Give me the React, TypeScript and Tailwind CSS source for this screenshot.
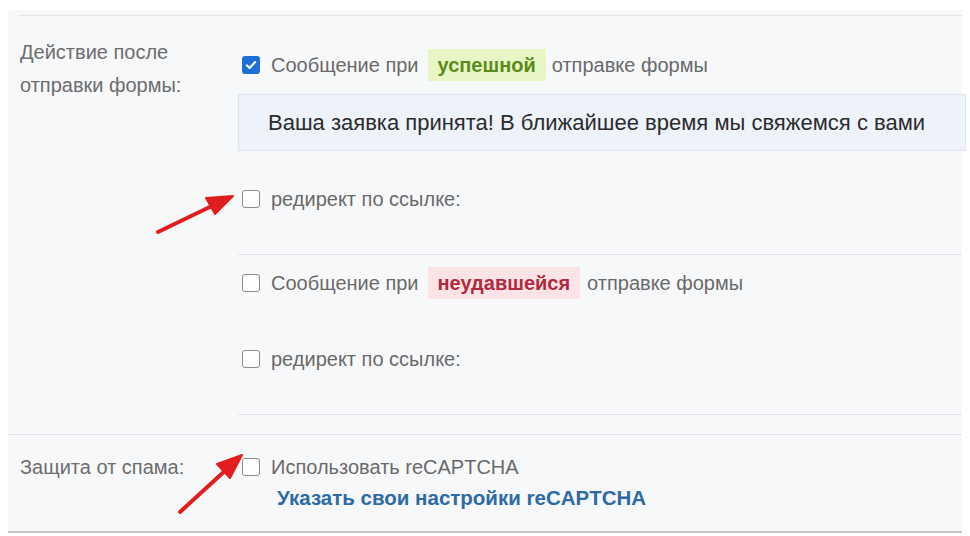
import React from "react";

const Box = ({ checked = false }: { checked?: boolean }) =>
  checked ? (
    <span className="flex h-[18px] w-[18px] shrink-0 items-center justify-center rounded-[3px] bg-[#1c6fd6]">
      <svg viewBox="0 0 16 16" className="h-[14px] w-[14px]">
        <path d="M3.2 8.4 6.4 11.4 12.8 4.6" fill="none" stroke="#fff" strokeWidth="2.4" strokeLinecap="round" strokeLinejoin="round" />
      </svg>
    </span>
  ) : (
    <span className="h-[18px] w-[18px] shrink-0 rounded-[3px] border-[1.5px] border-[#8c8c8c] bg-white" />
  );

const Row = ({ children, checked }: { children: React.ReactNode; checked?: boolean }) => (
  <div className="flex h-[32px] items-center gap-[11px] pl-[4px] text-[20px] text-[#6a6a6a]">
    <Box checked={checked} />
    <div className="flex items-center">{children}</div>
  </div>
);

export default function App() {
  return (
    <div className="relative h-[536px] w-[970px] overflow-hidden bg-white pt-[10px] font-['Liberation_Sans',Arial,sans-serif]">
      <div className="ml-[8px] h-[523px] w-[954px] border-b-2 border-[#c4c6ca] bg-[#f7f8fa] pt-[5px]">
        <div className="ml-[10px] border-t border-[#e3e5e9]" />

        {/* Действие после отправки формы */}
        <div className="flex">
          <div className="w-[230px] shrink-0 pl-[12px] pt-[20px] text-[20px] leading-[33px] text-[#6d6d6d]">
            Действие после
            <br />
            отправки формы:
          </div>
          <div className="flex-1">
            <div className="h-[239px] border-b border-[#e3e5e9] pt-[33px]">
              <Row checked>
                <span>Сообщение при</span>
                <span className="ml-[9px] mr-[6px] flex h-[32px] items-center bg-[#e8f6c6] px-[10px] font-bold text-[#5a8b1c]">успешной</span>
                <span>отправке формы</span>
              </Row>
              <div className="mr-[-4px] mt-[13px] flex h-[57px] items-center border border-[#dfe4ee] bg-[#edf2fb] pl-[29px] text-[22px] text-[#2c2c2c]">
                Ваша заявка принята! В ближайшее время мы свяжемся с вами
              </div>
              <div className="mt-[32px]">
                <Row>редирект по ссылке:</Row>
              </div>
            </div>
            <div className="h-[160px] border-b border-[#e3e5e9] pt-[12px]">
              <Row>
                <span>Сообщение при</span>
                <span className="ml-[9px] mr-[7px] flex h-[32px] items-center bg-[#fbe3e6] px-[10px] font-bold text-[#b3283f]">неудавшейся</span>
                <span>отправке формы</span>
              </Row>
              <div className="mt-[44px]">
                <Row>редирект по ссылке:</Row>
              </div>
            </div>
          </div>
        </div>

        <div className="mt-[19px] border-t border-[#e3e5e9]" />

        {/* Защита от спама */}
        <div className="flex pt-[16px]">
          <div className="w-[230px] shrink-0 pl-[12px] text-[20px] leading-[32px] text-[#6d6d6d]">Защита от спама:</div>
          <div>
            <Row>Использовать reCAPTCHA</Row>
            <div className="pl-[39px] pt-[1px] text-[20.5px] font-bold leading-[28px] text-[#2d6ba6]">
              Указать свои настройки reCAPTCHA
            </div>
          </div>
        </div>
      </div>

      {/* красные стрелки */}
      <svg className="pointer-events-none absolute left-0 top-0" width="970" height="536">
        <g fill="#e21d1d" stroke="#e21d1d" strokeLinecap="round" strokeLinejoin="round">
          <line x1="158" y1="232" x2="216" y2="204" strokeWidth="4" />
          <polygon points="233,196 206,198 215,214" strokeWidth="2" />
          <line x1="180" y1="512" x2="227" y2="469" strokeWidth="4" />
          <polygon points="242,455 217,464 230,478" strokeWidth="2" />
        </g>
      </svg>
    </div>
  );
}
